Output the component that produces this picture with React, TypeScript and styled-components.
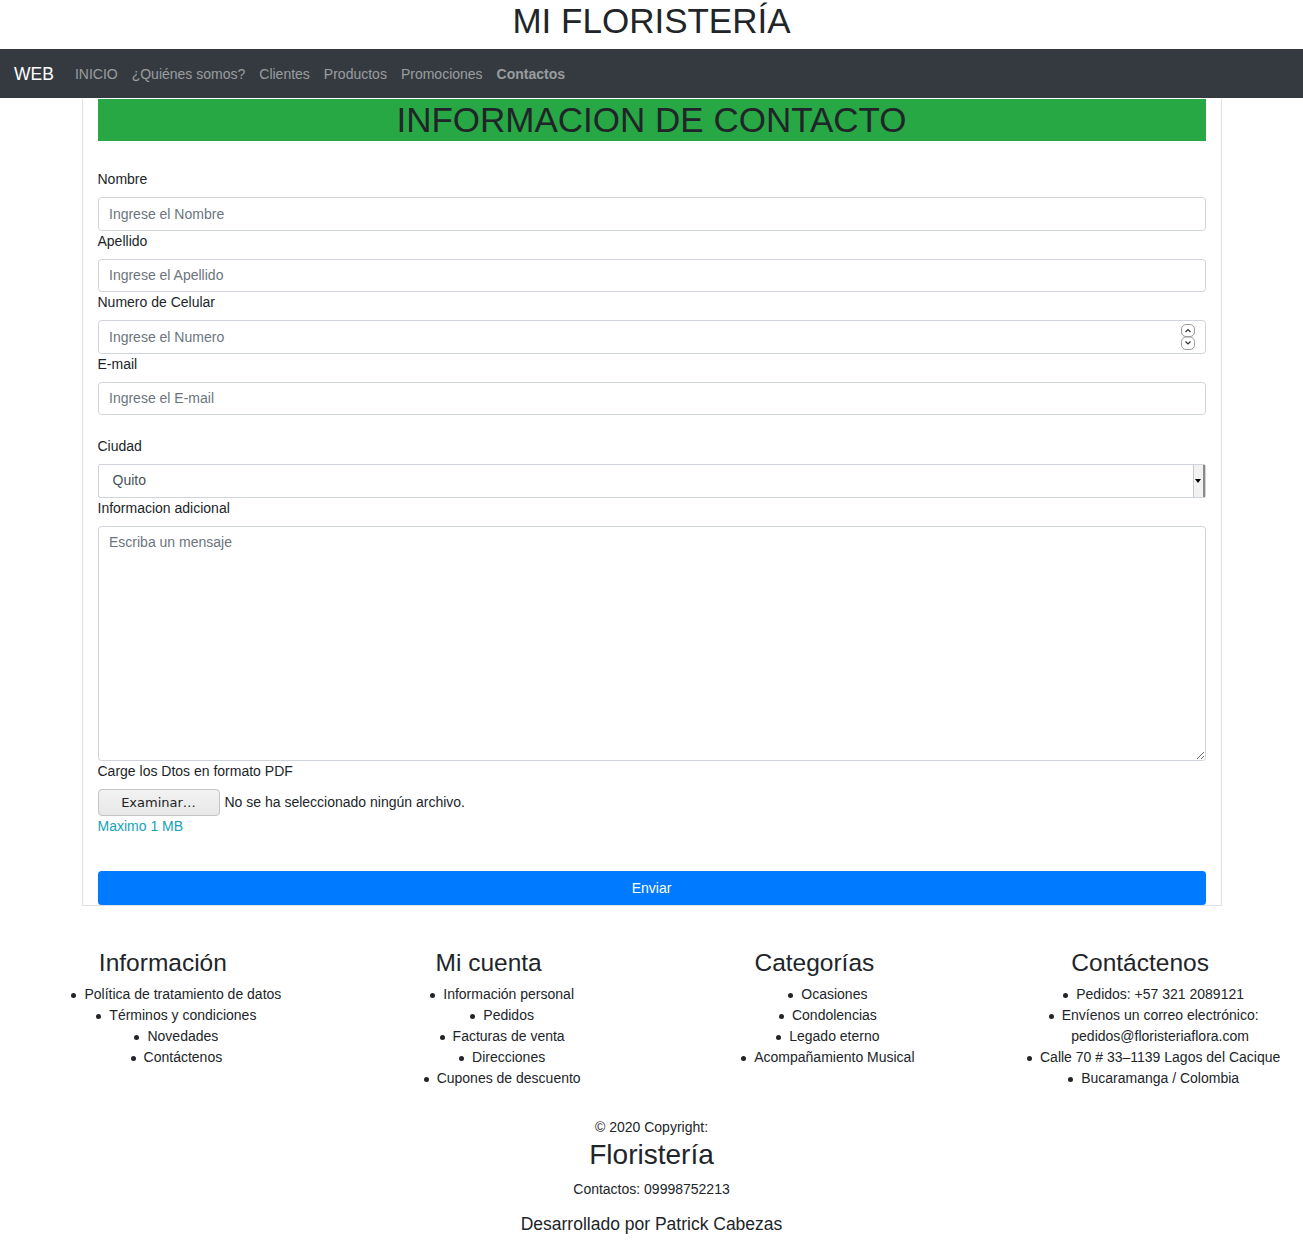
import React from "react";
import styled, { createGlobalStyle } from "styled-components";

const GlobalStyle = createGlobalStyle`
  * { box-sizing: border-box; }
  body {
    margin: 0;
    font-family: "Liberation Sans", Arial, sans-serif;
    font-size: 14px;
    line-height: 1.5;
    color: #212529;
    background: #fff;
  }
`;

const SiteTitle = styled.h1`
  margin: 0 0 7px;
  font-size: 35px;
  font-weight: 400;
  line-height: 1.2;
  text-align: center;
`;

const Navbar = styled.nav`
  display: flex;
  align-items: center;
  background: #343a40;
  padding: 8px 14px 6px;
`;

const Brand = styled.span`
  color: #fff;
  font-size: 17.5px;
  line-height: 1.5;
  padding: 4.375px 0;
  margin-right: 14px;
`;

const NavLink = styled.a<{ $active?: boolean }>`
  padding: 7px;
  color: rgba(255, 255, 255, 0.5);
  font-weight: ${(p) => (p.$active ? 700 : 400)};
  text-decoration: none;
  line-height: 21px;
`;

const Container = styled.main`
  width: 1140px;
  margin: 0 auto;
  padding: 0 15px;
  border: 1px solid #dee2e6;
  border-top: none;
`;

const Banner = styled.h1`
  margin: 1px 0 28px;
  background: #28a745;
  font-size: 35px;
  font-weight: 400;
  line-height: 1.2;
  text-align: center;
  color: #212529;
`;

const Label = styled.label`
  display: block;
  margin-bottom: 7px;
  line-height: 21px;
`;

const fieldBase = `
  display: block;
  width: 100%;
  font-family: "Liberation Sans", Arial, sans-serif;
  font-size: 14px;
  color: #495057;
  background: #fff;
  border: 1px solid #ced4da;
  border-radius: 3.5px;
  outline: none;
  &::placeholder { color: #6c757d; opacity: 1; }
`;

const Input = styled.input<{ $gapAfter?: boolean }>`
  ${fieldBase}
  height: 33.5px;
  padding: 5.25px 10.5px;
  line-height: 21px;
  margin-bottom: ${(p) => (p.$gapAfter ? "21px" : "0")};
`;

const FieldWrap = styled.div`
  position: relative;
`;

const Spinner = styled.svg`
  position: absolute;
  right: 11px;
  top: 4px;
`;

const Select = styled.select`
  ${fieldBase}
  appearance: none;
  -webkit-appearance: none;
  height: 33.5px;
  padding: 0 14px;
  line-height: 21px;
  border-radius: 2px;
`;

const SelectArrow = styled.span`
  position: absolute;
  right: 1px;
  top: 1px;
  bottom: 1px;
  width: 12px;
  background: #f2f2f2;
  border-left: 1px solid #c8c8c8;
  border-right: 2px solid #8a8a8a;
  display: flex;
  align-items: center;
  justify-content: center;
  pointer-events: none;
  &::after {
    content: "";
    border-left: 3.5px solid transparent;
    border-right: 3.5px solid transparent;
    border-top: 4px solid #000;
  }
`;

const TextArea = styled.textarea`
  ${fieldBase}
  height: 235px;
  padding: 5.25px 10.5px;
  line-height: 21px;
  resize: vertical;
`;

const FileRow = styled.div`
  display: flex;
  align-items: center;
  height: 27px;
`;

const FileButton = styled.button`
  width: 122px;
  height: 27px;
  padding: 0;
  margin-right: 5px;
  font-family: "DejaVu Sans", "Liberation Sans", sans-serif;
  font-size: 13px;
  color: #222;
  background: linear-gradient(#f2f2f2, #e8e8e8);
  border: 1px solid #c4c4c4;
  border-radius: 4px;
`;

const FileText = styled.span`
  line-height: 21px;
`;

const HelpText = styled.div`
  color: #17a2b8;
  line-height: 21px;
  margin-bottom: 34.5px;
`;

const SubmitButton = styled.button`
  display: block;
  width: 100%;
  height: 34px;
  border: none;
  border-radius: 3.5px;
  background: #007bff;
  color: #fff;
  font-family: "Liberation Sans", Arial, sans-serif;
  font-size: 14px;
`;

const Footer = styled.footer`
  margin-top: 42px;
`;

const FooterRow = styled.div`
  display: grid;
  grid-template-columns: repeat(4, 1fr);
`;

const FooterCol = styled.section`
  padding: 0 15px;
  text-align: center;
`;

const FooterHeading = styled.h3`
  margin: 0 0 7px;
  font-size: 24.5px;
  font-weight: 400;
  line-height: 1.2;
`;

const FooterList = styled.ul`
  margin: 0 0 14px;
  padding-left: 40px;
  list-style: none;
  line-height: 21px;
`;

const ItemText = styled.span`
  position: relative;
  display: inline-block;
  &::before {
    content: "";
    position: absolute;
    left: -13px;
    top: 9px;
    width: 5px;
    height: 5px;
    border-radius: 50%;
    background: #212529;
  }
`;

const Copyright = styled.div`
  padding: 14px 0 21px;
  text-align: center;
`;

const CopyLine = styled.p<{ $mb?: number }>`
  margin: 0 0 ${(p) => p.$mb ?? 0}px;
  line-height: 21px;
`;

const BrandBig = styled.h2`
  margin: 0 0 7px;
  font-size: 28px;
  font-weight: 400;
  line-height: 1.2;
`;

const Credit = styled.h5`
  margin: 0;
  font-size: 17.5px;
  font-weight: 400;
  line-height: 1.2;
`;

const navItems = ["INICIO", "¿Quiénes somos?", "Clientes", "Productos", "Promociones"];

const columns: { title: string; items: React.ReactNode[] }[] = [
  {
    title: "Información",
    items: ["Política de tratamiento de datos", "Términos y condiciones", "Novedades", "Contáctenos"],
  },
  {
    title: "Mi cuenta",
    items: ["Información personal", "Pedidos", "Facturas de venta", "Direcciones", "Cupones de descuento"],
  },
  {
    title: "Categorías",
    items: ["Ocasiones", "Condolencias", "Legado eterno", "Acompañamiento Musical"],
  },
  {
    title: "Contáctenos",
    items: [
      "Pedidos: +57 321 2089121",
      <>
        Envíenos un correo electrónico:
        <br />
        pedidos@floristeriaflora.com
      </>,
      "Calle 70 # 33–1139 Lagos del Cacique",
      "Bucaramanga / Colombia",
    ],
  },
];

export default function App() {
  return (
    <>
      <GlobalStyle />
      <SiteTitle>MI FLORISTERÍA</SiteTitle>
      <Navbar>
        <Brand>WEB</Brand>
        {navItems.map((n) => (
          <NavLink key={n} href="#">
            {n}
          </NavLink>
        ))}
        <NavLink href="#" $active>
          Contactos
        </NavLink>
      </Navbar>

      <Container>
        <Banner>INFORMACION DE CONTACTO</Banner>
        <form onSubmit={(e) => e.preventDefault()}>
          <Label>Nombre</Label>
          <Input placeholder="Ingrese el Nombre" />
          <Label>Apellido</Label>
          <Input placeholder="Ingrese el Apellido" />
          <Label>Numero de Celular</Label>
          <FieldWrap>
            <Input inputMode="numeric" placeholder="Ingrese el Numero" />
            <Spinner width="14" height="26" viewBox="0 0 14 26">
              <rect x="0.5" y="0.5" width="13" height="12" rx="4.5" fill="#fff" stroke="#9a9a9a" />
              <rect x="0.5" y="13" width="13" height="12.5" rx="4.5" fill="#fff" stroke="#9a9a9a" />
              <path d="M4.5 8 L7 5.5 L9.5 8" fill="none" stroke="#333" strokeWidth="1.2" />
              <path d="M4.5 17.5 L7 20 L9.5 17.5" fill="none" stroke="#333" strokeWidth="1.2" />
            </Spinner>
          </FieldWrap>
          <Label>E-mail</Label>
          <Input type="email" placeholder="Ingrese el E-mail" $gapAfter />
          <Label>Ciudad</Label>
          <FieldWrap>
            <Select defaultValue="Quito">
              <option>Quito</option>
              <option>Guayaquil</option>
              <option>Cuenca</option>
            </Select>
            <SelectArrow />
          </FieldWrap>
          <Label>Informacion adicional</Label>
          <TextArea placeholder="Escriba un mensaje" />
          <Label>Carge los Dtos en formato PDF</Label>
          <FileRow>
            <FileButton type="button">Examinar…</FileButton>
            <FileText>No se ha seleccionado ningún archivo.</FileText>
          </FileRow>
          <HelpText>Maximo 1 MB</HelpText>
          <SubmitButton type="submit">Enviar</SubmitButton>
        </form>
      </Container>

      <Footer>
        <FooterRow>
          {columns.map((c) => (
            <FooterCol key={c.title}>
              <FooterHeading>{c.title}</FooterHeading>
              <FooterList>
                {c.items.map((it, i) => (
                  <li key={i}>
                    <ItemText>{it}</ItemText>
                  </li>
                ))}
              </FooterList>
            </FooterCol>
          ))}
        </FooterRow>
        <Copyright>
          <CopyLine>© 2020 Copyright:</CopyLine>
          <BrandBig>Floristería</BrandBig>
          <CopyLine $mb={14}>Contactos: 09998752213</CopyLine>
          <Credit>Desarrollado por Patrick Cabezas</Credit>
        </Copyright>
      </Footer>
    </>
  );
}
